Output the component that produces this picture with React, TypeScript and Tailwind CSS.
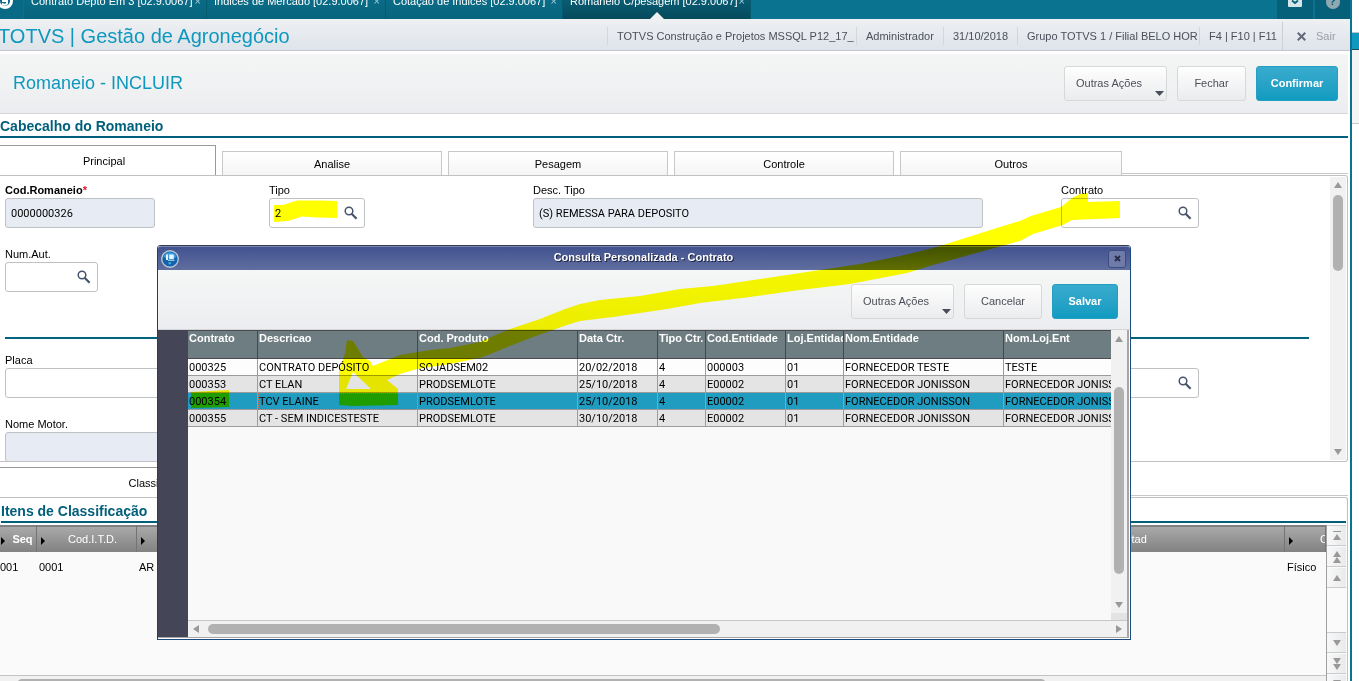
import type { ReactNode } from "react";
import clsx from "clsx";

const WINDOW_TABS = [
  { label: "Contrato Depto Em 3 [02.9.0067]", width: "w-[183px]" },
  { label: "Indices de Mercado [02.9.0067]", width: "w-[179px]" },
  { label: "Cotação de Indices [02.9.0067]", width: "w-[177px]" },
  { label: "Romaneio C/pesagem [02.9.0067]", width: "w-[188px]", active: true },
];

const SESSION = [
  { text: "TOTVS Construção e Projetos MSSQL P12_17_", width: "w-[249px]" },
  { text: "Administrador", width: "w-[87px]" },
  { text: "31/10/2018", width: "w-[74px]" },
  { text: "Grupo TOTVS 1 / Filial BELO HOR", width: "w-[182px]" },
  { text: "F4 | F10 | F11", width: "w-[83px]" },
];

const COLUMNS = [
  { label: "Contrato", width: "w-[70px]" },
  { label: "Descricao", width: "w-[160px]" },
  { label: "Cod. Produto", width: "w-[160px]" },
  { label: "Data Ctr.", width: "w-[80px]" },
  { label: "Tipo Ctr.", width: "w-[48px]" },
  { label: "Cod.Entidade", width: "w-[80px]" },
  { label: "Loj.Entidade", width: "w-[58px]" },
  { label: "Nom.Entidade", width: "w-[160px]" },
  { label: "Nom.Loj.Ent", width: "w-[160px]" },
];

const CONTRACTS = [
  ["000325", "CONTRATO DEPÓSITO", "SOJADSEM02", "20/02/2018", "4", "000003", "01", "FORNECEDOR TESTE", "TESTE"],
  ["000353", "CT ELAN", "PRODSEMLOTE", "25/10/2018", "4", "E00002", "01", "FORNECEDOR JONISSON", "FORNECEDOR JONISSON"],
  ["000354", "TCV ELAINE", "PRODSEMLOTE", "25/10/2018", "4", "E00002", "01", "FORNECEDOR JONISSON", "FORNECEDOR JONISSON"],
  ["000355", "CT - SEM INDICESTESTE", "PRODSEMLOTE", "30/10/2018", "4", "E00002", "01", "FORNECEDOR JONISSON", "FORNECEDOR JONISSON"],
];

const SELECTED = "000354";

function Lens() {
  return (
    <svg width="14" height="14" viewBox="0 0 14 14" aria-hidden="true">
      <circle cx="5" cy="5" r="3.8" fill="none" stroke="#47536a" strokeWidth="1.5" />
      <path d="M7.6 7.8 12.6 12.8" stroke="#47536a" strokeWidth="2.2" />
    </svg>
  );
}

function Triangle({ dir, className }: { dir: "up" | "down" | "left" | "right"; className?: string }) {
  const points = { up: "4,0 8,6 0,6", down: "0,0 8,0 4,6", left: "6,0 6,8 0,4", right: "0,0 6,4 0,8" }[dir];
  const flat = dir === "up" || dir === "down";
  return (
    <svg width={flat ? 8 : 6} height={flat ? 6 : 8} className={clsx("shrink-0 fill-[#999]", className)} aria-hidden="true">
      <polygon points={points} />
    </svg>
  );
}

function Button({ children, menu, primary, className }: { children: ReactNode; menu?: boolean; primary?: boolean; className: string }) {
  return (
    <button
      type="button"
      className={clsx(
        "relative h-[35px] rounded-[3px] border bg-linear-to-b text-[11px]",
        primary ? "border-[#249fc2] from-[#38abcd] to-[#0f9bc1] font-bold text-white" : "border-[#d6d8d9] from-[#fefefe] to-[#ebecee] text-[#4c4f59]",
        menu && "pr-[13px]",
        className,
      )}
    >
      {children}
      {menu && (
        <svg width="9" height="5" className="absolute right-[2px] bottom-1 fill-[#4a4e5c]" aria-hidden="true">
          <polygon points="0,0 9,0 4.5,5" />
        </svg>
      )}
    </button>
  );
}

function Field({ id, label, value = "", width, locked, lookup, required, className }: {
  id: string; label: string; value?: string; width: string; locked?: boolean; lookup?: boolean; required?: boolean; className?: string;
}) {
  return (
    <div className={className}>
      <label htmlFor={id} className={clsx("block h-4 text-[11px] leading-4", required && "font-bold")}>
        {label}
        {required && <span className="text-[#e8112d]">*</span>}
      </label>
      <div className={clsx("flex h-[30px] items-center rounded-[3px] border border-[#bfc2c4]", width, locked ? "bg-[#e7ebf3]" : "bg-white")}>
        <input id={id} defaultValue={value} readOnly={locked} className="h-full w-full min-w-0 bg-transparent px-[5px] font-['Roboto',sans-serif] text-[11px] outline-none" />
        {lookup && (
          <button type="button" aria-label={`Pesquisar ${label}`} className="mr-[6px] shrink-0">
            <Lens />
          </button>
        )}
      </div>
    </div>
  );
}

function SectionTitle({ children }: { children: ReactNode }) {
  return <h2 className="border-b-2 border-[#005f7b] text-sm font-bold text-[#005f7b]">{children}</h2>;
}

function FormPanel() {
  return (
    <div className="flex h-[287px] overflow-hidden rounded-r-[3px] border-y border-r border-[#bfc1c3] bg-white">
      <form className="min-w-0 flex-1 px-[5px] pt-[6px]">
        <div className="grid grid-cols-5 gap-y-[18px]">
          <Field id="cod" label="Cod.Romaneio" value="0000000326" width="w-[150px]" locked required />
          <Field id="tipo" label="Tipo" value="2" width="w-[96px]" lookup />
          <Field id="desc" label="Desc. Tipo" value="(S) REMESSA PARA DEPOSITO" width="w-[450px]" locked className="col-span-2" />
          <Field id="contrato" label="Contrato" width="w-[138px]" lookup />
          <Field id="aut" label="Num.Aut." width="w-[93px]" lookup />
        </div>
        <hr className="mt-[45px] mr-4 border-0 border-t-2 border-t-[#00647f]" />
        <div className="mt-[13px] grid grid-cols-5 gap-y-[18px]">
          <Field id="placa" label="Placa" width="w-[200px]" lookup className="col-span-4" />
          <Field id="motorista" label="Motorista" width="w-[138px]" lookup />
          <Field id="nome" label="Nome Motor." width="w-[450px]" locked className="col-span-2" />
        </div>
      </form>
      <div className="my-px mr-px flex w-4 flex-col items-center bg-[#f1f1f1] py-[5px]">
        <Triangle dir="up" />
        <div className="mt-[7px] h-[76px] w-[10px] rounded-full bg-[#b1b1b1]" />
        <Triangle dir="down" className="mt-auto" />
      </div>
    </div>
  );
}

function FormTabs() {
  const tabs = ["Analise", "Pesagem", "Controle", "Outros"];
  return (
    <div role="tablist" className="mt-[7px] flex h-[30px] items-end gap-[6px] text-[11px]">
      <button type="button" role="tab" aria-selected="true" className="-ml-2 h-[30px] w-[224px] border border-b-0 border-[#999] bg-white pt-[2px]">
        Principal
      </button>
      {tabs.map((tab) => (
        <button key={tab} type="button" role="tab" aria-selected="false" className="h-6 w-[220px] border border-b-0 border-[#c6c8ca] bg-linear-to-b from-white to-[#f5f5f6] pt-[2px] last-of-type:w-[222px]">
          {tab}
        </button>
      ))}
      <div className="mb-px -ml-[6px] flex-1 border-b border-[#c6c8ca]" />
    </div>
  );
}

function HeaderCell({ children, className }: { children?: ReactNode; className?: string }) {
  return (
    <th className={clsx("relative h-[27px] overflow-hidden border-t-2 border-r border-t-[#808080] border-r-[#747474] bg-linear-to-b from-[#a9a9a9] to-[#828282] p-0 text-[11px] whitespace-nowrap text-white", className)}>
      <svg width="4" height="8" className="absolute top-[10px] left-1 fill-black" aria-hidden="true">
        <polygon points="0,0 4,4 0,8" />
      </svg>
      {children}
    </th>
  );
}

function NavButton({ label, children }: { label: string; children: ReactNode }) {
  return (
    <button type="button" aria-label={label} className="flex h-[20px] w-full flex-col items-center justify-center border-b border-[#c9cacc] bg-linear-to-r from-[#f8f8f8] to-[#e9eaec]">
      {children}
    </button>
  );
}

function ItemsPanel() {
  return (
    <section className="flex min-h-0 flex-1 flex-col overflow-hidden rounded-tr-[3px] border-t border-r border-[#bfc1c3] bg-[#fafafa]">
      <div className="mr-px bg-white pt-[3px] pb-[2px] pl-px">
        <SectionTitle>Itens de Classificação</SectionTitle>
      </div>
      <div className="mr-px flex min-h-0 flex-1">
        <div className="flex min-w-0 flex-1 flex-col border-r border-[#a0a0a0]">
          <table className="w-full table-fixed border-separate border-spacing-0 text-[11px]">
            <thead>
              <tr>
                <HeaderCell className="w-[37px] pl-[9px] font-bold [&>svg]:left-px">Seq</HeaderCell>
                <HeaderCell className="w-[100px] pl-3 font-normal">Cod.I.T.D.</HeaderCell>
                <HeaderCell className="font-normal">Descrição</HeaderCell>
                <HeaderCell className="w-[334px] pr-4 font-normal">Descr.Resultad</HeaderCell>
                <HeaderCell className="w-[41px] pl-[35px] text-left font-normal">C</HeaderCell>
              </tr>
            </thead>
            <tbody>
              <tr className="h-[30px]">
                <td>001</td>
                <td className="pl-[2px]">0001</td>
                <td className="pl-[2px]">AR</td>
                <td />
                <td className="pl-[2px]">Físico</td>
              </tr>
            </tbody>
          </table>
          <div className="mt-auto h-[6px] border-t border-[#c4c4c4] bg-[#f1f1f1] pt-[3px]">
            <div className="ml-[17px] h-[10px] w-[1029px] rounded-full bg-[#b1b1b1]" />
          </div>
        </div>
        <div className="flex w-[19px] flex-col gap-px overflow-hidden border-t border-[#c9cacc]">
          <NavButton label="Primeiro">
            <span className="mb-[2px] h-px w-2 bg-[#999]" />
            <Triangle dir="up" />
          </NavButton>
          <NavButton label="Página anterior">
            <Triangle dir="up" />
            <Triangle dir="up" />
          </NavButton>
          <NavButton label="Anterior">
            <Triangle dir="up" />
          </NavButton>
          <div className="mt-auto h-[49px] shrink-0 space-y-px overflow-hidden border-t border-[#c9cacc]">
            <NavButton label="Próximo">
              <Triangle dir="down" />
            </NavButton>
            <NavButton label="Próxima página">
              <Triangle dir="down" />
              <Triangle dir="down" />
            </NavButton>
            <NavButton label="Último">
              <Triangle dir="down" className="mb-1" />
            </NavButton>
          </div>
        </div>
      </div>
    </section>
  );
}

function ContractDialog() {
  return (
    <div role="dialog" aria-label="Consulta Personalizada - Contrato" className="absolute top-[245px] left-[157px] z-10 flex h-[395px] w-[974px] flex-col rounded-t border border-t-[#333a4d] border-r-[#1c4a80] border-b-[#1c4a80] border-l-[#1c3f70] bg-white">
      <div className="flex h-6 shrink-0 items-center rounded-t-[3px] border-t border-[#7c88b4] bg-linear-to-b from-[#42528f] to-[#606e9f] pr-1 pl-[3px]">
        <svg width="18" height="18" viewBox="0 0 18 18" aria-hidden="true">
          <circle cx="9" cy="9" r="8.3" fill="#1263ab" stroke="#b9c6d6" strokeWidth="1.4" />
          <path d="M2.5 7a6.8 6.8 0 0 1 13 0c-3 2-9 2-13 0z" fill="#3d9bdb" />
          <path d="M5 4.500h2v5.500H5zM8.200 4.500h4.600V9H8.200z" fill="#e8f4fd" />
          <path d="M7 10.200h6.500" stroke="#b8dcf4" strokeWidth="1.2" />
          <path d="M7 12.500h3.500l-1.700 2.200z" fill="#58c0ef" />
        </svg>
        <h2 className="flex-1 pb-[2px] text-center text-[11px] font-bold text-white [text-shadow:1px_1px_0_#1c2340]">Consulta Personalizada - Contrato</h2>
        <button type="button" aria-label="Fechar janela" className="flex h-[18px] w-[18px] items-center justify-center rounded-[3px] border border-[#3c4a80] bg-[#6f7ba9]">
          <svg width="7" height="7" viewBox="0 0 7 7" aria-hidden="true">
            <path d="M1 1l5 5M6 1l-5 5" stroke="#252c48" strokeWidth="1.8" />
          </svg>
        </button>
      </div>
      <div className="flex h-[60px] shrink-0 items-center justify-end gap-[10px] border-b border-[#d4d5d7] bg-linear-to-b from-[#f5f7f6] to-[#ecedf0] pt-1 pr-3">
        <Button menu className="w-[103px]">Outras Ações</Button>
        <Button className="w-[78px]">Cancelar</Button>
        <Button primary className="w-[66px]">Salvar</Button>
      </div>
      <div className="mr-px mb-px flex min-h-0 flex-1 border-r-2 border-b border-[#a6a6a6] bg-[#f9f9f9]">
        <div className="w-[30px] bg-[#444657]" />
        <div className="flex min-w-0 flex-1 flex-col">
          <div className="flex min-h-0 flex-1">
            <div className="min-w-0 flex-1 overflow-hidden">
              <table className="w-[976px] table-fixed border-separate border-spacing-0 text-[11px] whitespace-nowrap">
                <thead>
                  <tr>
                    {COLUMNS.map((col) => (
                      <th key={col.label} className={clsx("h-[29px] overflow-hidden border-y border-r border-y-[#4c4c50] border-r-[#46494c] bg-[#6e7d81] p-0 pl-px text-left align-top leading-[14px] font-bold text-white", col.width)}>
                        {col.label}
                      </th>
                    ))}
                  </tr>
                </thead>
                <tbody>
                  {CONTRACTS.map((row, r) => (
                    <tr key={row[0]} aria-selected={row[0] === SELECTED} className={row[0] === SELECTED ? "bg-[#1f9cbf]" : r === 0 ? "bg-[#fdfdfd]" : "bg-[#e4e4e4]"}>
                      {row.map((cell, c) => (
                        <td
                          key={c}
                          className={clsx(
                            "h-[17px] overflow-hidden border-r border-b border-[#9c9c9c] p-0 pt-[2px] pl-px font-['Roboto',sans-serif] leading-[14px]",
                            row[0] === SELECTED && c === 1 && "outline outline-offset-[-1px] outline-dotted outline-[#f0603c]",
                          )}
                        >
                          {cell}
                        </td>
                      ))}
                    </tr>
                  ))}
                </tbody>
              </table>
            </div>
            <div className="flex w-4 shrink-0 flex-col items-center border-b-[7px] border-[#e3e3e3] bg-[#f1f1f1] pt-[6px] pb-[5px]">
              <Triangle dir="up" />
              <div className="mt-[45px] h-[187px] w-[10px] rounded-full bg-[#b1b1b1]" />
              <Triangle dir="down" className="mt-auto" />
            </div>
          </div>
          <div className="flex h-[17px] shrink-0 items-center border-t border-[#c6c6c6] bg-[#f1f1f1] px-[5px]">
            <Triangle dir="left" />
            <div className="ml-[9px] h-[10px] w-[512px] rounded-full bg-[#b1b1b1]" />
            <Triangle dir="right" className="ml-auto" />
          </div>
        </div>
      </div>
    </div>
  );
}

// Marker strokes drawn over the screen, from the Contrato field to the chosen row
function Highlights() {
  return (
    <svg width="1359" height="681" className="pointer-events-none absolute top-0 left-0 z-20 fill-[#ff0] mix-blend-multiply" aria-hidden="true">
      <path d="M274 205H283L297 200.500H320L337 201V218L318 217.500L302 216.500L288 221L274 222Z" />
      <path
        fillRule="evenodd"
        d="M1120 201L1088 202V193L1080 194L1072 198L1061 207L1031 216L1020 221L1000 227L943 245L933 248L900 256L860 264L800 273L760 279L713 286L680 289L640 296L600 300L580 304L565 309L540 319L507 330L480 342L450 348L430 350L400 355L373 366L370 361L363 357L353 341L347 340L345 353L339 372V405L353 406L398 405V389L387 380L400 374L417 369L450 364L483 357L510 346L533 337L567 325L580 321L613 317L667 309L700 303L750 297L800 290L850 284L907 273L933 265L987 250L1020 241L1033 234L1063 225L1072 220L1120 218ZM353 372L371 389H346Z"
      />
      <path d="M191 392L229 390V407L191 408Z" />
    </svg>
  );
}

export default function App() {
  return (
    <div className="relative flex h-screen overflow-hidden bg-white font-['Liberation_Sans',Arial,sans-serif] text-black">
      <div className="flex min-w-0 flex-1 flex-col border-r-2 border-[#0a7390]">
        <header className="flex h-[19px] shrink-0 items-end overflow-hidden bg-[#0a7390]">
          <div className="flex h-9 w-6 shrink-0 items-center border-r border-[#33616e] bg-[#086a84]">
            <svg width="16" height="16" viewBox="0 0 16 16" className="-ml-[3px]" aria-hidden="true">
              <circle cx="8" cy="8" r="6.500" fill="none" stroke="#fff" strokeWidth="3" />
              <path d="M5 8h5v2.500c-1.500 1.500-3.500 1.500-5 0" fill="none" stroke="#fff" strokeWidth="2" />
            </svg>
          </div>
          <nav className="flex">
            {WINDOW_TABS.map((tab) => (
              <div
                key={tab.label}
                className={clsx(
                  "relative flex h-9 items-center justify-between border-r border-[#055a70] bg-linear-to-b pr-[5px] pl-[7px] text-[11px] whitespace-nowrap text-white",
                  tab.width,
                  tab.active ? "from-[#0a6c87] to-[#064a5c]" : "from-[#0a7390] to-[#08647d]",
                )}
              >
                <a href="#" className="pt-px">{tab.label}</a>
                <button type="button" aria-label="Fechar aba" className="text-[#a5cbd6]">×</button>
                {tab.active && (
                  <svg width="14" height="7" className="absolute bottom-0 left-[87px] fill-[#eef0f2]" aria-hidden="true">
                    <polygon points="7,0 14,7 0,7" />
                  </svg>
                )}
              </div>
            ))}
          </nav>
          <button type="button" aria-label="Mensagens" className="ml-auto flex h-9 w-9 items-center justify-center bg-[#076079]">
            <svg width="14" height="11" viewBox="0 0 14 11" aria-hidden="true">
              <rect width="14" height="11" rx="1" fill="#d5e5ea" />
              <path d="M4 4.500L7 7l3-2.500" fill="none" stroke="#076079" strokeWidth="1.8" />
            </svg>
          </button>
          <button type="button" aria-label="Ajuda" className="ml-[2px] flex h-9 w-[35px] items-center justify-center bg-[#076079]">
            <span className="mt-px flex h-[14px] w-[14px] items-center justify-center rounded-full bg-[#8fa9b3] text-[11px] font-bold text-[#0b5b72]">?</span>
          </button>
        </header>

        <div className="flex h-8 shrink-0 items-center border-b border-[#c3c7cc] bg-linear-to-b from-[#eef0f2] to-[#dfe4ea] text-[11px] whitespace-nowrap text-[#4c4f59]">
          <h1 className="-ml-[2px] flex-1 pt-[3px] text-xl text-[#0f98be]">TOTVS | Gestão de Agronegócio</h1>
          {SESSION.map((item) => (
            <span key={item.text} className={clsx("mt-[2px] h-[18px] shrink-0 border-l border-[#d3d7d8] pl-[9px] leading-[18px]", item.width)}>
              {item.text}
            </span>
          ))}
          <a href="#" className="mt-[3px] flex h-[28px] w-[68px] items-center gap-[10px] border-l border-[#ccd0d2] pl-[14px] text-[#9a9ea6]">
            <svg width="9" height="9" viewBox="0 0 9 9" aria-hidden="true">
              <path d="M.8.8l7.400 7.400M8.200.8L.8 8.200" stroke="#62687a" strokeWidth="2" />
            </svg>
            Sair
          </a>
        </div>

        <main className="mr-[2px] flex min-h-0 flex-1 flex-col">
          <div className="mt-[3px] flex h-[60px] shrink-0 items-center justify-end gap-[10px] border-b border-[#d4d5d7] bg-linear-to-b from-[#f4f6f5] to-[#ecedf0] pr-[10px]">
            <h2 className="flex-1 pb-[2px] pl-[13px] text-lg text-[#0f98be]">Romaneio - INCLUIR</h2>
            <Button menu className="w-[103px]">Outras Ações</Button>
            <Button className="w-[69px]">Fechar</Button>
            <Button primary className="w-[82px]">Confirmar</Button>
          </div>
          <div className="pt-[2px]">
            <SectionTitle>Cabecalho do Romaneio</SectionTitle>
          </div>
          <FormTabs />
          <FormPanel />
          <div role="tablist" className="mt-[5px] flex h-[30px] shrink-0 items-end text-[11px]">
            <button type="button" role="tab" aria-selected="true" className="-ml-2 h-[30px] w-[338px] border border-b-0 border-[#999] bg-white pt-[2px]">
              Classificação
            </button>
            <div className="mb-px flex-1 border-b border-[#c6c8ca]" />
          </div>
          <ItemsPanel />
        </main>
      </div>

      <aside className="w-[7px] shrink-0 pt-8">
        <div className="h-[18px] border-t border-b border-t-[#b9c6cc] border-b-[#20485c] bg-[#0f98c0]" />
        <div className="h-[74px] border-b border-[#c8c8c8] bg-[#f4f4f4]" />
      </aside>

      <ContractDialog />
      <Highlights />
    </div>
  );
}
